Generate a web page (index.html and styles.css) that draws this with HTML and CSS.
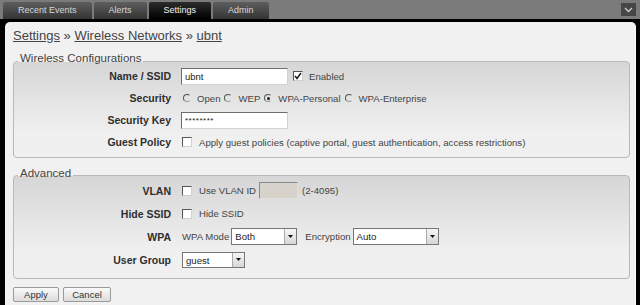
FILE: index.html
```html
<!DOCTYPE html>
<html lang="en">
<head>
    <meta charset="UTF-8">
    <meta name="viewport" content="width=device-width, initial-scale=1.0">
    <title>Settings - Wireless Networks - ubnt</title>
    <link rel="stylesheet" href="styles.css">
</head>
<body>

    <header class="topbar">
        <nav class="tabs">
            <a class="tab" href="#">Recent Events</a>
            <a class="tab" href="#">Alerts</a>
            <a class="tab active" href="#">Settings</a>
            <a class="tab" href="#">Admin</a>
        </nav>
        <button class="menu-btn" type="button">
            <svg width="9" height="6" viewBox="0 0 9 6"><polyline points="1,1 4.5,4.5 8,1" fill="none" stroke="#cfcfcf" stroke-width="1.3"/></svg>
        </button>
    </header>

    <div class="frame">
        <main class="panel">
            <h1 class="crumbs">
                <a href="#">Settings</a> &raquo; <a href="#">Wireless Networks</a> &raquo; <a href="#">ubnt</a>
            </h1>

            <fieldset class="group">
                <legend>Wireless Configurations</legend>
                <div class="form-grid">
                    <label class="field-label">Name / SSID</label>
                    <div class="field">
                        <input class="text-input" type="text" value="ubnt">
                        <span class="check checked spaced"><svg width="8" height="8" viewBox="0 0 8 8"><polyline points="1,4 3,6.5 7,1" fill="none" stroke="#222" stroke-width="1.6"/></svg></span>
                        <span>Enabled</span>
                    </div>

                    <label class="field-label">Security</label>
                    <div class="field radios">
                        <span class="radio"></span><span class="radio-text">Open</span>
                        <span class="radio"></span><span class="radio-text">WEP</span>
                        <span class="radio checked"></span><span class="radio-text">WPA-Personal</span>
                        <span class="radio"></span><span class="radio-text">WPA-Enterprise</span>
                    </div>

                    <label class="field-label">Security Key</label>
                    <div class="field">
                        <input class="text-input key" type="text" value="********">
                    </div>

                    <label class="field-label">Guest Policy</label>
                    <div class="field">
                        <span class="check"></span>
                        <span>Apply guest policies (captive portal, guest authentication, access restrictions)</span>
                    </div>
                </div>
            </fieldset>

            <fieldset class="group advanced">
                <legend>Advanced</legend>
                <div class="form-grid">
                    <label class="field-label">VLAN</label>
                    <div class="field">
                        <span class="check"></span>
                        <span>Use VLAN ID</span>
                        <input class="text-input vlan" type="text" disabled>
                        <span>(2-4095)</span>
                    </div>

                    <label class="field-label">Hide SSID</label>
                    <div class="field">
                        <span class="check"></span>
                        <span>Hide SSID</span>
                    </div>

                    <label class="field-label">WPA</label>
                    <div class="field wpa">
                        <span>WPA Mode</span>
                        <div class="select mode"><span class="select-value">Both</span><span class="select-arrow"><svg width="5" height="3" viewBox="0 0 5 3"><polygon points="0,0 5,0 2.5,3" fill="#111"/></svg></span></div>
                        <span class="enc-label">Encryption</span>
                        <div class="select enc"><span class="select-value">Auto</span><span class="select-arrow"><svg width="5" height="3" viewBox="0 0 5 3"><polygon points="0,0 5,0 2.5,3" fill="#111"/></svg></span></div>
                    </div>

                    <label class="field-label">User Group</label>
                    <div class="field">
                        <div class="select group-sel"><span class="select-value">guest</span><span class="select-arrow"><svg width="5" height="3" viewBox="0 0 5 3"><polygon points="0,0 5,0 2.5,3" fill="#111"/></svg></span></div>
                    </div>
                </div>
            </fieldset>

            <div class="actions">
                <button class="btn" type="button">Apply</button>
                <button class="btn" type="button">Cancel</button>
            </div>
        </main>
    </div>

</body>
</html>
```
FILE: styles.css
```css
* { box-sizing: border-box; }
body { margin: 0; width: 640px; height: 305px; overflow: hidden; background: #000; font-family: "Liberation Sans", Arial, sans-serif; font-size: 9.6px; color: #444; }

/* top navigation */
.topbar { height: 19px; background: #7b7b7b; display: flex; align-items: flex-end; padding-left: 3px; }
.tabs { display: flex; gap: 2px; }
.tab { height: 17px; line-height: 17px; padding: 0 15px; font-size: 9px; color: #d8d8d8; text-decoration: none; background: linear-gradient(#5e5e5e, #343434); border-radius: 2px 2px 0 0; }
.tab.active { background: linear-gradient(#2c2c2c, #000); color: #f2f2f2; }
.menu-btn { margin: 3px 4px 0 auto; align-self: flex-start; width: 15px; height: 13px; padding: 0; border: 0; background: #464646; display: flex; align-items: center; justify-content: center; }

/* page panel */
.frame { padding: 3px 4px 0 5px; background: #000; }
.panel { height: 283px; background: #f1f1f1; border-radius: 5px 5px 0 0; border-right: 1px solid #fbfbfb; padding: 6px 5px 0 8px; }
.crumbs { margin: 0 0 8px; font-size: 13px; line-height: 16px; font-weight: normal; color: #444; }
.crumbs a { color: #444; text-decoration: underline; }

/* fieldsets */
.group { margin: 0; padding: 0 0 4px; min-width: 0; border: 1px solid #b9b9b9; border-radius: 4px; background: linear-gradient(#d6d6d6, #f0f0f0 75%); }
.group legend { margin-left: 4px; padding: 0 2px 6px; margin-bottom: -10px; font-size: 11.5px; line-height: 12px; color: #444; }
.group.advanced { margin-top: 8px; padding-bottom: 7px; }
.advanced legend { padding-bottom: 4px; margin-bottom: -8px; line-height: 14px; }
.form-grid { display: grid; grid-template-columns: 157px 1fr; column-gap: 10px; grid-auto-rows: 22px; align-items: center; padding-top: 5px; }
.advanced .form-grid { grid-auto-rows: 23px; padding-top: 3px; }
.field-label { text-align: right; font-weight: bold; font-size: 10.5px; color: #2e2e2e; }
.field { display: flex; align-items: center; white-space: nowrap; }

/* controls */
.text-input { width: 107px; height: 17px; margin: 0; padding: 0 3px; border: 1px solid; border-color: #6c6c6c #d2d2d2 #d2d2d2 #6c6c6c; background: #fff; font: 9.5px "Liberation Sans", Arial, sans-serif; color: #222; }
.text-input.key { font-size: 8px; letter-spacing: 0.5px; }
.text-input.vlan { width: 39px; margin: 0 4px 0 3px; background: #d7d3cb; border-color: #8a8a8a #e0e0e0 #e0e0e0 #8a8a8a; }
.check { width: 10px; height: 10px; margin: 0 7px 0 1px; border: 1px solid; border-color: #555 #cfcfcf #cfcfcf #555; background: #fff; display: inline-flex; align-items: center; justify-content: center; }
.check.spaced { margin-left: 5px; margin-right: 6px; }
.radios { padding-left: 2px; }
.radio { width: 8px; height: 8px; border-radius: 50%; border: 1px solid; border-color: #555 #e4e4e4 #999 #555; display: inline-flex; align-items: center; justify-content: center; }
.radio.checked::after { content: ""; width: 3px; height: 3px; border-radius: 50%; background: #222; }
.radio-text { margin: 0 4px 0 6px; }
.enc-label { margin-left: 8px; }
.wpa > span:first-child { margin-left: 1px; }
.select { display: inline-flex; height: 17px; margin-left: 2px; border: 1px solid #777; background: #fff; }
.select-value { flex: 1; padding-left: 3px; line-height: 15px; color: #222; }
.select-arrow { width: 12px; border-left: 1px solid #aaa; background: linear-gradient(#f6f6f6, #d6d6d6); display: flex; align-items: center; justify-content: center; }
.select.mode { width: 66px; }
.select.enc { width: 86px; }
.select.group-sel { width: 63px; height: 16px; margin-left: 1px; }

/* buttons */
.actions { display: flex; gap: 4px; margin-top: 8px; }
.btn { height: 15px; padding: 0; border: 1px solid #9a9a9a; border-radius: 2px; background: linear-gradient(#fafafa, #dcdcdc); font: 9.5px "Liberation Sans", Arial, sans-serif; color: #333; }
.btn:first-child { width: 46px; }
.btn:last-child { width: 48px; }
```
